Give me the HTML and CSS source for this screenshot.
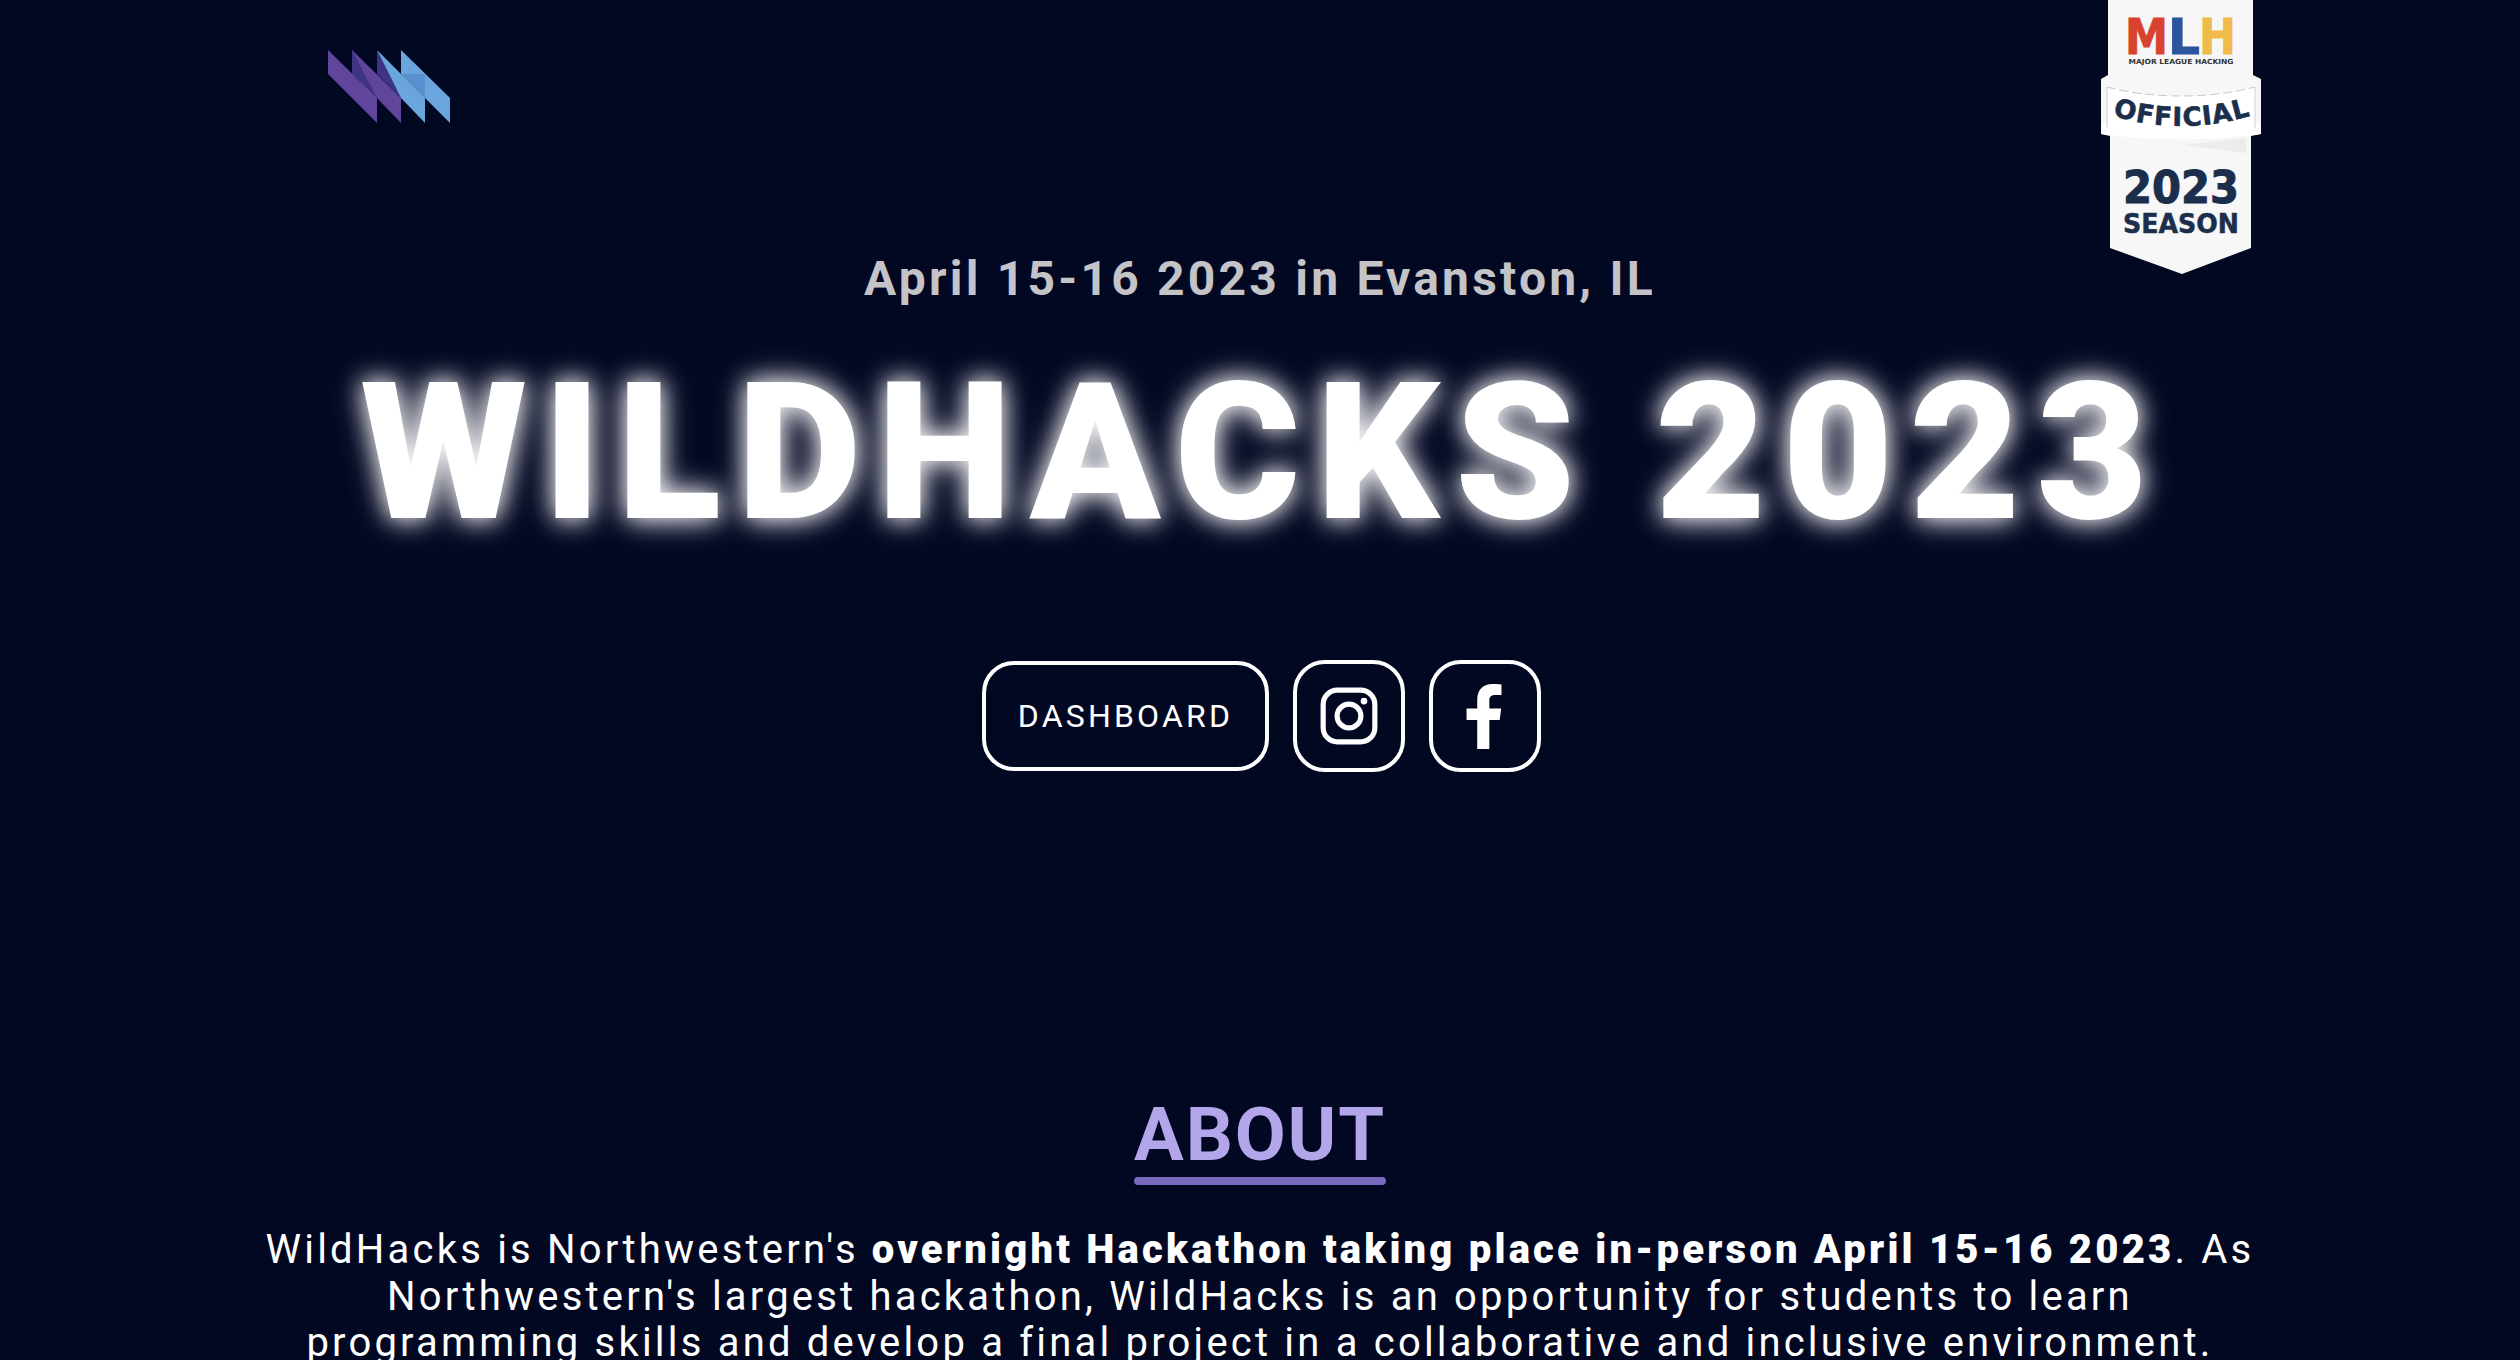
FILE: index.html
```html
<!DOCTYPE html>
<html lang="en">

<head>
    <meta charset="UTF-8">
    <title>WildHacks 2023</title>
    <link rel="stylesheet" href="styles.css">
</head>

<body>
    <!-- mlh trust badge -->
    <svg class="badge" viewBox="0 0 160 274" width="160" height="274">
        <path d="M7 0H152V75L160 79V134L150 136V248L81 274L9 248V136L0 134V79L7 75Z" fill="#f7f7f7" />
        <path d="M0 134C50 141 110 141 160 134V125C110 100 50 100 0 125Z" fill="#ffffff" />
        <path d="M6 87C50 99 110 99 154 87V128C110 136 50 136 6 128Z" fill="#ffffff" />
        <path d="M82 145L145 138V153Z" fill="#ececec" />
        <path d="M6 87C50 99 110 99 154 87" fill="none" stroke="#c8c8c8" stroke-width="1" stroke-dasharray="9 4" />
        <path d="M6 87V128M154 87V128" fill="none" stroke="#d0d0d0" stroke-width="1" />
        <text class="mlh" x="24" y="54" fill="#d8432f" stroke="#d8432f" textLength="43" lengthAdjust="spacingAndGlyphs">M</text>
        <text class="mlh" x="67" y="54" fill="#2b55a0" stroke="#2b55a0" textLength="32" lengthAdjust="spacingAndGlyphs">L</text>
        <text class="mlh" x="98" y="54" fill="#f0bb4b" stroke="#f0bb4b" textLength="37" lengthAdjust="spacingAndGlyphs">H</text>
        <text class="mlh-sub" x="80" y="64" text-anchor="middle" textLength="105" lengthAdjust="spacingAndGlyphs">MAJOR LEAGUE HACKING</text>
        <path id="ribbon" d="M10 115Q80 137 152 115" fill="none" />
        <text class="official"><textPath href="#ribbon" startOffset="50%" text-anchor="middle">OFFICIAL</textPath></text>
        <text class="year" x="80" y="203" text-anchor="middle" textLength="116" lengthAdjust="spacingAndGlyphs">2023</text>
        <text class="season" x="80" y="233" text-anchor="middle" textLength="116" lengthAdjust="spacingAndGlyphs">SEASON</text>
    </svg>

    <header class="topbar">
        <svg class="logo" viewBox="0 0 122 73" width="122" height="73">
            <path d="M0 0L49 48V73L0 24Z" fill="#5f459c" />
            <path d="M24 0L73 48V73L49 48L24 24Z" fill="#5f459c" />
            <path d="M24 0L49 48L24 24Z" fill="#3f3385" />
            <path d="M49 0L73 48L49 24Z" fill="#3f3385" />
            <path d="M73 0L122 48V73L73 24Z" fill="#6aa5de" />
            <path d="M49 0L97 48V73L73 48Z" fill="#6aa5de" />
            <path d="M73 24H97V48Z" fill="#5a8fd0" />
        </svg>
    </header>

    <section class="hero">
        <h3 class="date">April 15-16 2023 in Evanston, IL</h3>
        <h1 class="title">WILDHACKS 2023</h1>
        <div class="links">
            <a class="btn" href="#">DASHBOARD</a>
            <a class="btn-icon" href="#">
                <svg viewBox="0 0 24 24" width="62" height="62">
                    <rect x="2" y="2" width="20" height="20" rx="5.5" fill="none" stroke="#fff" stroke-width="2" />
                    <circle cx="12" cy="12" r="4.6" fill="none" stroke="#fff" stroke-width="2" />
                    <circle cx="17.8" cy="6.2" r="1.3" fill="#fff" />
                </svg>
            </a>
            <a class="btn-icon" href="#">
                <svg viewBox="0 0 24 24" width="71" height="71">
                    <path d="M9.2 23V13.2H5.6V9.3H9.2V6.3C9.2 2.9 11.3 1 14.3 1C15.8 1 17 1.1 17.4 1.2V4.7H15.3C13.6 4.7 13.3 5.5 13.3 6.7V9.3H17.3L16.8 13.2H13.3V23Z" fill="#fff" />
                </svg>
            </a>
        </div>
    </section>

    <section class="about">
        <h2 class="about-title">ABOUT</h2>
        <p class="about-text">WildHacks is Northwestern's <b>overnight Hackathon taking place in-person April 15-16 2023</b>. As Northwestern's largest hackathon, WildHacks is an opportunity for students to learn programming skills and develop a final project in a collaborative and inclusive environment.</p>
    </section>
</body>

</html>
```

FILE: styles.css
```css
* {
    margin: 0px;
    padding: 0px;
    box-sizing: border-box;
}

html,
body {
    height: 1360px;
    overflow: hidden;
}

body {
    background-color: #020722;
    color: white;
    font-family: Roboto, sans-serif;
}

a {
    color: white;
    text-decoration: none;
}

.badge {
    position: absolute;
    top: 0;
    left: 2101px;
}

.mlh {
    font-family: "DejaVu Sans", sans-serif;
    font-weight: 700;
    font-size: 49px;
    stroke-width: 1px;
}

.mlh-sub {
    font-family: "DejaVu Sans", sans-serif;
    font-weight: 700;
    font-size: 7px;
    fill: #333;
}

.official {
    font-family: "DejaVu Sans", sans-serif;
    font-weight: 700;
    font-size: 26px;
    letter-spacing: 1px;
    fill: #1b2e4b;
    stroke: #1b2e4b;
    stroke-width: 0.6px;
}

.year {
    font-family: "DejaVu Sans", sans-serif;
    font-weight: 700;
    font-size: 44px;
    fill: #1b2e4b;
    stroke: #1b2e4b;
    stroke-width: 1px;
}

.season {
    font-family: "DejaVu Sans", sans-serif;
    font-weight: 700;
    font-size: 26px;
    fill: #1b2e4b;
    stroke: #1b2e4b;
    stroke-width: 0.5px;
}

.topbar {
    padding: 50px 0 0 328px;
    height: 123px;
}

.logo {
    display: block;
}

.hero {
    display: flex;
    flex-direction: column;
    align-items: center;
    padding-top: 128px;
}

.date {
    font-size: 48px;
    font-weight: 700;
    line-height: 56px;
    letter-spacing: 0.067em;
    color: #c4c4c8;
}

.title {
    margin-top: 33px;
    margin-left: 4px;
    font-size: 192px;
    font-weight: 900;
    line-height: 225px;
    letter-spacing: 0.083em;
    text-shadow: 0 0 24px #fff, 0 0 36px rgba(255, 255, 255, 0.5);
}

.links {
    display: flex;
    align-items: center;
    gap: 24px;
    margin-top: 95px;
    padding-left: 3px;
}

.btn {
    display: flex;
    align-items: center;
    height: 110px;
    padding: 0 32px;
    border: 4px solid white;
    border-radius: 32px;
    font-size: 32px;
    letter-spacing: 0.1em;
}

.btn-icon {
    display: flex;
    align-items: center;
    justify-content: center;
    width: 112px;
    height: 112px;
    border: 4px solid white;
    border-radius: 32px;
}

.about {
    display: flex;
    flex-direction: column;
    align-items: center;
    padding-top: 321px;
}

.about-title {
    font-size: 74px;
    font-weight: 700;
    line-height: 84px;
    letter-spacing: 0.025em;
    color: #b4a6ea;
}

.about-title::after {
    content: "";
    display: block;
    height: 8px;
    background-color: #7a68bd;
    border-radius: 4px;
}

.about-text {
    width: 2000px;
    margin-top: 42px;
    font-size: 40px;
    line-height: 46.5px;
    letter-spacing: 0.08em;
    text-align: center;
}

.about-text b {
    font-weight: 900;
}
```
